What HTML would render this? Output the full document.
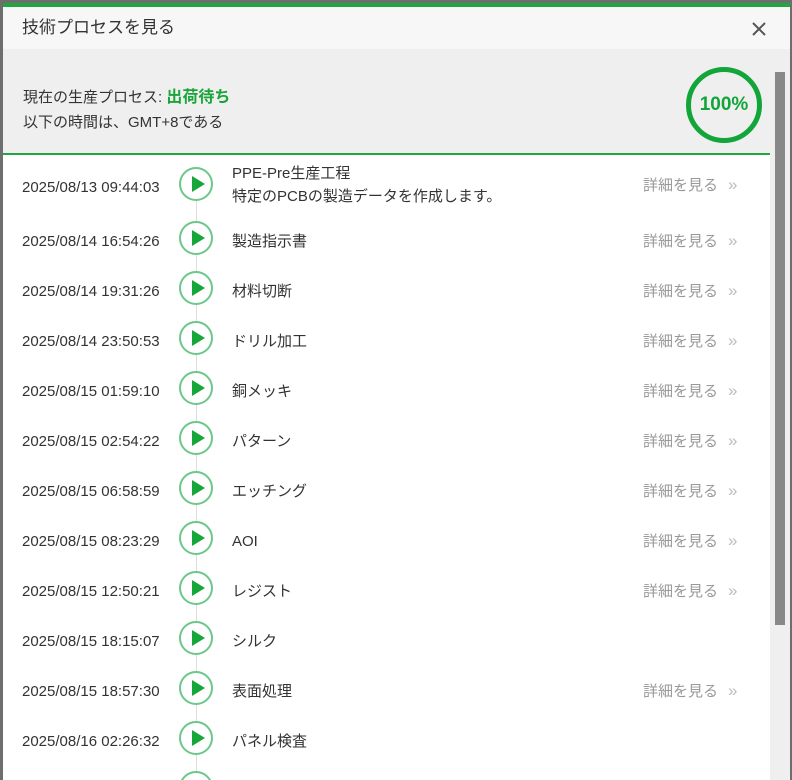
<!DOCTYPE html>
<html style="overflow:hidden"><head><meta charset="utf-8"><style>
html,body{overflow:hidden;height:780px}
body{margin:0;width:792px;background:#6e6e6e;position:relative;font-family:"Liberation Sans","Noto Sans CJK JP",sans-serif;color:#333}
.m{position:absolute;left:3px;top:3px;width:787px;height:777px;background:#fff;border-top:4px solid #22a640;box-sizing:border-box;overflow:hidden}
.hd{position:absolute;left:0;top:0;width:787px;height:42px;background:#f7f7f7;font-size:17px;line-height:42px;padding-left:19px;box-sizing:border-box;color:#333}
.x{position:absolute;left:749px;top:15px}
.st{position:absolute;left:0;top:42px;width:767px;height:104px;background:#efefef;border-bottom:2px solid #22a640}
.s1{position:absolute;left:20px;top:39px;font-size:15px;line-height:20px}
.s1 b{color:#1aa53a;font-size:16px}
.s2{position:absolute;left:20px;top:64px;font-size:15px;line-height:20px}
.ring{position:absolute;left:683px;top:18px;width:76px;height:76px;border:5px solid #12a53a;border-radius:50%;box-sizing:border-box;text-align:center;line-height:66px;color:#12a53a;font-weight:bold;font-size:19px}
.sb{position:absolute;left:772px;top:65px;width:10px;height:553px;background:#888}
.tr{position:absolute;left:767px;top:42px;width:20px;height:735px;background:#efefef}
.line{position:absolute;left:193px;top:190px;width:1px;height:590px;background:#ddd}
.r{position:absolute;left:0;width:767px;font-size:15px;line-height:20px}
.r span{line-height:20px}
.t{position:absolute;left:19px;top:0}
.c{position:absolute;left:176px;top:-11px;width:34px;height:34px;border:2px solid #6cc88a;border-radius:50%;box-sizing:border-box;background:#fff}
.c:after{content:"";position:absolute;left:11px;top:7px;border-left:13px solid #16a63a;border-top:8px solid transparent;border-bottom:8px solid transparent}
.n{position:absolute;left:229px;top:0}
.d{position:absolute;left:640px;top:-1px;color:#999}
.d b{font-weight:normal;margin-left:10px;color:#bbb;font-size:17px}
</style></head><body>
<div class="m">
<div class="hd">技術プロセスを見る<svg class="x" width="14" height="14" viewBox="0 0 14 14"><path d="M1 1L13 13M13 1L1 13" stroke="#555" stroke-width="2"/></svg></div>
<div class="st">
<div class="s1">現在の生産プロセス: <b>出荷待ち</b></div>
<div class="s2">以下の時間は、GMT+8である</div>
<div class="ring">100%</div>
</div>
<div class="tr"></div><div class="sb"></div>
<div class="line"></div>
<div class="r" style="top:171px"><span class="t">2025/08/13 09:44:03</span><span class="c"></span><span class="n" style="top:-16px;line-height:23px">PPE-Pre生産工程<br>特定のPCBの製造データを作成します。</span><span class="d" style="top:-3px">詳細を見る<b>»</b></span></div>
<div class="r" style="top:225px"><span class="t">2025/08/14 16:54:26</span><span class="c"></span><span class="n">製造指示書</span><span class="d">詳細を見る<b>»</b></span></div>
<div class="r" style="top:275px"><span class="t">2025/08/14 19:31:26</span><span class="c"></span><span class="n">材料切断</span><span class="d">詳細を見る<b>»</b></span></div>
<div class="r" style="top:325px"><span class="t">2025/08/14 23:50:53</span><span class="c"></span><span class="n">ドリル加工</span><span class="d">詳細を見る<b>»</b></span></div>
<div class="r" style="top:375px"><span class="t">2025/08/15 01:59:10</span><span class="c"></span><span class="n">銅メッキ</span><span class="d">詳細を見る<b>»</b></span></div>
<div class="r" style="top:425px"><span class="t">2025/08/15 02:54:22</span><span class="c"></span><span class="n">パターン</span><span class="d">詳細を見る<b>»</b></span></div>
<div class="r" style="top:475px"><span class="t">2025/08/15 06:58:59</span><span class="c"></span><span class="n">エッチング</span><span class="d">詳細を見る<b>»</b></span></div>
<div class="r" style="top:525px"><span class="t">2025/08/15 08:23:29</span><span class="c"></span><span class="n">AOI</span><span class="d">詳細を見る<b>»</b></span></div>
<div class="r" style="top:575px"><span class="t">2025/08/15 12:50:21</span><span class="c"></span><span class="n">レジスト</span><span class="d">詳細を見る<b>»</b></span></div>
<div class="r" style="top:625px"><span class="t">2025/08/15 18:15:07</span><span class="c"></span><span class="n">シルク</span></div>
<div class="r" style="top:675px"><span class="t">2025/08/15 18:57:30</span><span class="c"></span><span class="n">表面処理</span><span class="d">詳細を見る<b>»</b></span></div>
<div class="r" style="top:725px"><span class="t">2025/08/16 02:26:32</span><span class="c"></span><span class="n">パネル検査</span></div>
<div class="r" style="top:775px"><span class="c"></span></div>
</div>
</body></html>
